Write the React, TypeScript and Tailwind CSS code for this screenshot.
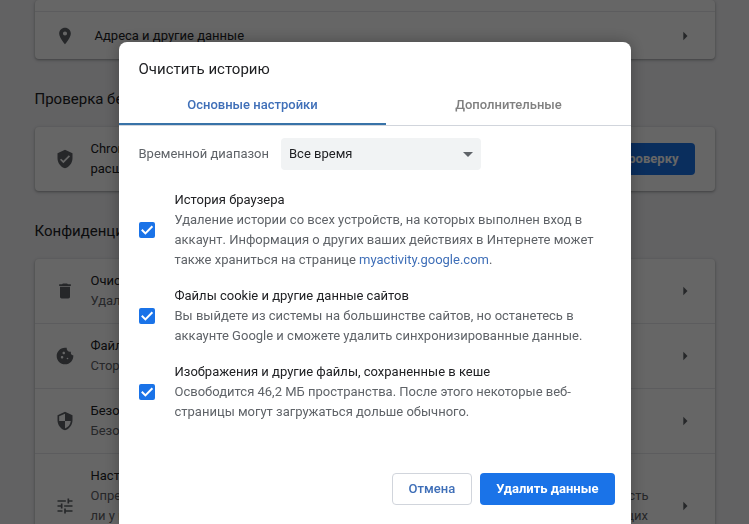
import React from "react";
import type { IconType } from "react-icons";
import {
  MdArrowRight,
  MdCookie,
  MdDelete,
  MdLocationOn,
  MdSecurity,
  MdTune,
  MdVerifiedUser,
} from "react-icons/md";

interface SettingsRowProps {
  icon: IconType;
  title: string;
  description: string;
}

const SettingsRow = ({ icon: Icon, title, description }: SettingsRowProps) => {
  return (
    <a
      href="#"
      className="flex items-center gap-4 px-5 py-3 border-b border-gray-200 last:border-b-0"
    >
      <Icon className="size-5 shrink-0 text-[#5f6368]" />
      <div className="flex-1 leading-5">
        <div className="text-[#202124]">{title}</div>
        <div className="text-[#5f6368] whitespace-pre-line">{description}</div>
      </div>
      <MdArrowRight className="size-5 shrink-0 text-[#5f6368]" />
    </a>
  );
};

const privacyRows: SettingsRowProps[] = [
  {
    icon: MdDelete,
    title: "Очистить историю",
    description: "Удалить файлы cookie и данные сайтов, очистить историю и кеш",
  },
  {
    icon: MdCookie,
    title: "Файлы cookie и другие данные сайтов",
    description: "Сторонние файлы cookie заблокированы в режиме инкогнито",
  },
  {
    icon: MdSecurity,
    title: "Безопасность",
    description: "Безопасный просмотр (защита от опасных сайтов) и другие настройки",
  },
  {
    icon: MdTune,
    title: "Настройки сайтов",
    description:
      "Определяет, какую информацию могут использовать и показывать сайты (например, есть\nли у них доступ к геоданным и камерам и разрешается ли показ рекламы и всплывающих\nокон)",
  },
];

const SettingsPage = () => {
  const card = "bg-white rounded shadow-[0_1px_2px_rgba(60,64,67,0.3),0_1px_3px_1px_rgba(60,64,67,0.15)]";
  const heading = "pt-7 pb-4 text-[15px] leading-6 text-[#202124]";
  return (
    <main className="w-full max-w-[680px] mx-auto">
      <section className={card}>
        <div className="h-3 border-b border-gray-200" />
        <a href="#" className="flex items-center gap-5 px-5 h-[47px]">
          <MdLocationOn className="size-5 text-[#5f6368]" />
          <span className="flex-1 text-[#202124]">Адреса и другие данные</span>
          <MdArrowRight className="size-5 text-[#5f6368]" />
        </a>
      </section>

      <h2 className={heading}>Проверка безопасности</h2>
      <section className={card + " flex items-center gap-4 px-5 py-3"}>
        <MdVerifiedUser className="size-5 shrink-0 text-[#5f6368]" />
        <p className="flex-1 leading-5 text-[#202124]">
          Chrome поможет защититься от утечки данных, ненадежных расширений и других проблем
        </p>
        <button className="h-8 px-4 rounded bg-[#1a73e8] text-white font-bold">
          Выполнить проверку
        </button>
      </section>

      <h2 className={heading}>Конфиденциальность и безопасность</h2>
      <section className={card}>
        {privacyRows.map((row) => (
          <SettingsRow key={row.title} {...row} />
        ))}
      </section>
    </main>
  );
};

interface ClearOptionProps {
  id: string;
  title: string;
  children: React.ReactNode;
}

const ClearOption = ({ id, title, children }: ClearOptionProps) => {
  return (
    <div className="flex items-center gap-5">
      <span className="relative size-4 shrink-0">
        <input
          id={id}
          type="checkbox"
          defaultChecked
          className="peer block size-4 appearance-none rounded-xs border-2 border-[#5f6368] checked:border-[#1a73e8] checked:bg-[#1a73e8]"
        />
        <svg
          viewBox="0 0 16 16"
          className="absolute inset-0 size-4 pointer-events-none opacity-0 peer-checked:opacity-100"
        >
          <path d="M2.8 7.8l3.6 3.6L13.4 4.2" fill="none" stroke="#fff" strokeWidth="2" />
        </svg>
      </span>
      <div className="leading-5">
        <label htmlFor={id} className="block text-[#202124]">
          {title}
        </label>
        <p className="text-[#5f6368]">{children}</p>
      </div>
    </div>
  );
};

const ClearHistoryDialog = () => {
  return (
    <div
      role="dialog"
      aria-labelledby="dialog-title"
      className="w-full max-w-[512px] min-h-full flex flex-col bg-white rounded-t-lg shadow-[0_0_16px_rgba(0,0,0,0.3)]"
    >
      <h1 id="dialog-title" className="px-5 pt-[15px] pb-px text-[15px] leading-6 text-[#202124]">
        Очистить историю
      </h1>
      <div role="tablist" className="flex h-11 border-b border-gray-300 font-medium">
        <button
          role="tab"
          aria-selected="true"
          className="flex-auto pt-1 border-b-2 border-[#3873a8] text-[#3f6fb8]"
        >
          Основные настройки
        </button>
        <button
          role="tab"
          aria-selected="false"
          className="flex-auto pt-1 border-b-2 border-transparent text-[#808080]"
        >
          Дополнительные
        </button>
      </div>

      <div className="flex items-center gap-3 px-5 pt-3">
        <label htmlFor="range" className="text-[#5f6368]">
          Временной диапазон
        </label>
        <div className="relative w-[200px]">
          <select
            id="range"
            className="w-full h-8 pl-2 pr-7 appearance-none rounded bg-[#f1f3f4] text-[#202124]"
          >
            <option>Все время</option>
          </select>
          <svg viewBox="0 0 10 5" className="absolute right-2 top-3.5 w-2.5 h-[5px] pointer-events-none">
            <path d="M0 0h10L5 5z" fill="#5f6368" />
          </svg>
        </div>
      </div>

      <div className="flex flex-col gap-4 px-5 pt-5">
        <ClearOption id="history" title="История браузера">
          Удаление истории со всех устройств, на которых выполнен вход в аккаунт. Информация о
          других ваших действиях в Интернете может также храниться на странице{" "}
          <a href="#" className="text-[#3f6fb8]">
            myactivity.google.com
          </a>
          .
        </ClearOption>
        <ClearOption id="cookies" title="Файлы cookie и другие данные сайтов">
          Вы выйдете из системы на большинстве сайтов, но останетесь в аккаунте Google и сможете
          удалить синхронизированные данные.
        </ClearOption>
        <ClearOption id="cache" title="Изображения и другие файлы, сохраненные в кеше">
          Освободится 46,2 МБ пространства. После этого некоторые веб-страницы могут загружаться
          дольше обычного.
        </ClearOption>
      </div>

      <div className="flex justify-end gap-2 px-4 mt-auto pb-[19px]">
        <button className="h-8 px-4 rounded border border-gray-300 text-[#3f6fb8] font-medium">
          Отмена
        </button>
        <button className="h-8 px-4 rounded bg-[#1a73e8] text-white font-bold">
          Удалить данные
        </button>
      </div>
    </div>
  );
};

const App = () => {
  return (
    <div className="h-screen overflow-hidden bg-[#f4f4f7] font-[Roboto,sans-serif] text-[13px]">
      <SettingsPage />
      <div className="fixed inset-0 flex justify-center bg-black/60 pt-[42px]">
        <ClearHistoryDialog />
      </div>
    </div>
  );
};

export default App;
